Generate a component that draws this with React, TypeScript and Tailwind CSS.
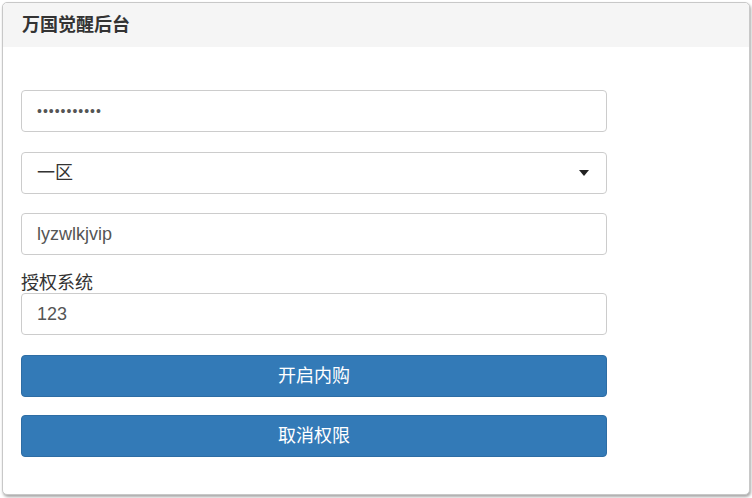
import React from "react";

const font = { fontFamily: '"Liberation Sans", "Noto Sans CJK SC", sans-serif' };

export default function App() {
  return (
    <div className="w-[752px] h-[498px] bg-white p-[2px]" style={font}>
      <div className="h-[493px] w-[748px] rounded-[5px] border border-[#c8c8c8] bg-white shadow-[1px_2px_3px_rgba(0,0,0,0.35)] overflow-hidden">
        <div className="h-[44px] bg-[#f5f5f5] px-[19px] flex items-center rounded-t-[4px]">
          <h1 className="text-[18px] font-bold text-[#333]">万国觉醒后台</h1>
        </div>
        <div className="px-[18px] pt-[43px] flex flex-col w-[622px]">
          <Field>
            <span className="text-[14px] tracking-[1px] text-[#555]">•••••••••••</span>
          </Field>
          <div className="mt-[20px] h-[42px] rounded-[4px] border border-[#ccc] px-[15px] flex items-center justify-between">
            <span className="text-[18px] text-[#333]">一区</span>
            <svg width="10" height="6" viewBox="0 0 10 6" className="mr-[2px]">
              <path d="M0 0 L10 0 L5 6 Z" fill="#222" />
            </svg>
          </div>
          <div className="mt-[19px]">
            <Field>
              <span className="text-[18px] text-[#555]">lyzwlkjvip</span>
            </Field>
          </div>
          <label className="mt-[18px] text-[18px] leading-[20px] text-[#333]">授权系统</label>
          <Field>
            <span className="text-[18px] text-[#555]">123</span>
          </Field>
          <Btn label="开启内购" className="mt-[20px]" />
          <Btn label="取消权限" className="mt-[18px]" />
        </div>
      </div>
    </div>
  );
}

function Field({ children }: { children: React.ReactNode }) {
  return (
    <div className="h-[42px] rounded-[4px] border border-[#ccc] px-[15px] flex items-center">
      {children}
    </div>
  );
}

function Btn({ label, className }: { label: string; className: string }) {
  return (
    <button className={className + " h-[42px] rounded-[4px] border border-[#2e6da4] bg-[#337ab7] text-white text-[18px]"}>
      {label}
    </button>
  );
}
